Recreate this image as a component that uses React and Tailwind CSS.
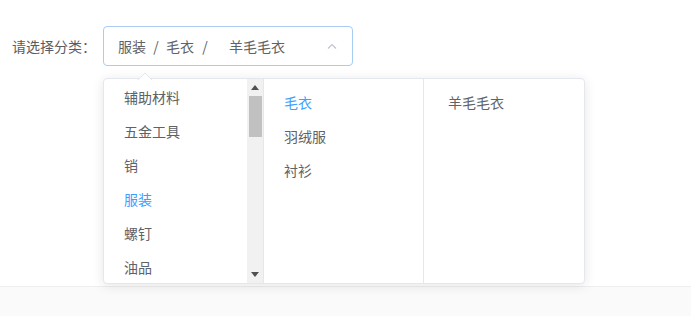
export default function App() {
  const col1 = ["辅助材料", "五金工具", "销", "服装", "螺钉", "油品"];
  const col2 = ["毛衣", "羽绒服", "衬衫"];
  return (
    <div className="w-[691px] h-[316px] bg-white flex flex-col overflow-hidden" style={{ fontFamily: '"Noto Sans CJK SC", "Noto Sans", sans-serif' }}>
      <div className="relative h-[286px] shrink-0">
        <div className="flex items-center pt-[26px] pl-[12px]">
          <span className="text-[14px] text-[#5a5c61] w-[91px]">请选择分类：</span>
          <div className="w-[250px] h-[40px] border border-[#a7cdf3] rounded-[4px] flex items-center pl-[14px] pr-[10px] text-[14px] text-[#606266]">
            <span>服装</span>
            <span className="w-[20px] text-center">/</span>
            <span>毛衣</span>
            <span className="w-[22px] text-center">/</span>
            <span className="ml-[13px]">羊毛毛衣</span>
            <svg className="ml-auto mr-[4px]" width="12" height="8" viewBox="0 0 12 8">
              <path d="M2 6.5 L6 2.5 L10 6.5" fill="none" stroke="#c0c4cc" strokeWidth="1.2" />
            </svg>
          </div>
        </div>

        <div className="absolute left-[103px] top-[78px] flex bg-white border border-[#e4e7ed] rounded-[4px] shadow-[0_2px_12px_0_rgba(0,0,0,0.1)]">
          <svg className="absolute left-[34px] top-[-7px]" width="14" height="8" viewBox="0 0 14 8">
            <path d="M0 8 L7 1 L14 8" fill="white" stroke="#e4e7ed" strokeWidth="1" />
          </svg>
          <div className="w-[160px] h-[204px] border-r border-[#e4e7ed] flex overflow-hidden">
            <div className="w-[143px] pt-[1px] text-[14px] text-[#606266]">
              {col1.map((t) => (
                <div key={t} className={"h-[34px] leading-[34px] pl-[20px] " + (t === "服装" ? "text-[#409eff]" : "")}>{t}</div>
              ))}
            </div>
            <div className="w-[16px] h-[204px] bg-[#f1f1f1] flex flex-col items-center">
              <div className="h-[17px] w-full flex items-center justify-center">
                <svg width="8" height="5" viewBox="0 0 8 5"><path d="M0 5 L4 0 L8 5 Z" fill="#505050" /></svg>
              </div>
              <div className="w-[13px] h-[41px] bg-[#c1c1c1]" />
              <div className="flex-1" />
              <div className="h-[17px] w-full flex items-center justify-center">
                <svg width="8" height="5" viewBox="0 0 8 5"><path d="M0 0 L8 0 L4 5 Z" fill="#505050" /></svg>
              </div>
            </div>
          </div>
          <div className="w-[160px] h-[204px] border-r border-[#e4e7ed] pt-[6px] text-[14px] text-[#606266]">
            {col2.map((t) => (
              <div key={t} className={"h-[34px] leading-[34px] pl-[20px] " + (t === "毛衣" ? "text-[#409eff]" : "")}>{t}</div>
            ))}
          </div>
          <div className="w-[160px] h-[204px] pt-[6px] text-[14px] text-[#606266]">
            <div className="h-[34px] leading-[34px] pl-[24px]">羊毛毛衣</div>
          </div>
        </div>
      </div>
      <div className="flex-1 bg-[#fafafa] border-t border-[#eeeeee]" />
    </div>
  );
}
